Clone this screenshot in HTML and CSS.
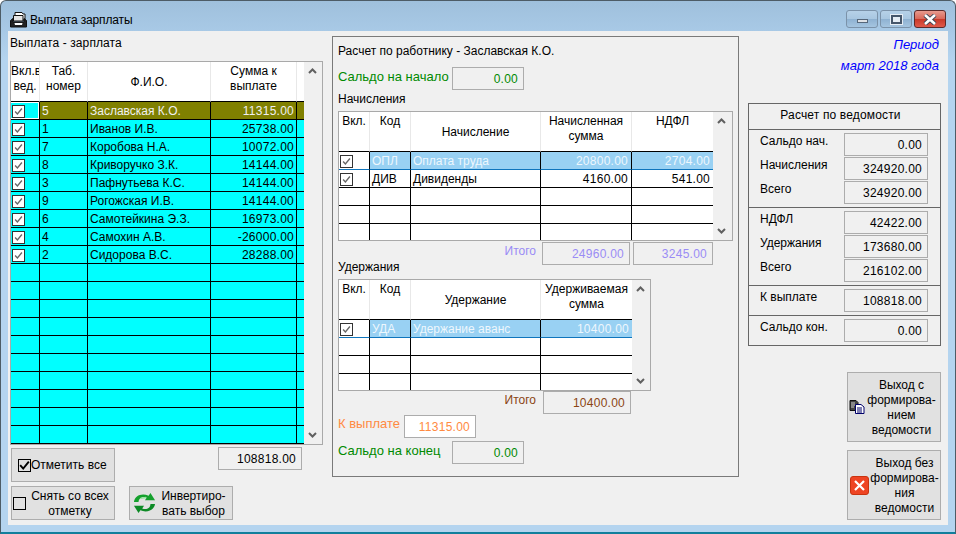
FILE: index.html
```html
<!DOCTYPE html>
<html lang="ru">
<head>
  <meta charset="UTF-8" />
  <title>Выплата зарплаты</title>
  <link rel="stylesheet" href="styles.css">
</head>
<body>
<svg class="defs" width="0" height="0">
  <symbol id="tick" viewBox="0 0 13 13"><path d="M2.5 6.5 L5.2 9.5 L10.5 3" fill="none" stroke="#666" stroke-width="1.6"/></symbol>
  <symbol id="up" viewBox="0 0 9 6"><path d="M1 5 L4.5 1.5 L8 5" fill="none" stroke="#606060" stroke-width="2"/></symbol>
  <symbol id="down" viewBox="0 0 9 6"><path d="M1 1 L4.5 4.5 L8 1" fill="none" stroke="#606060" stroke-width="2"/></symbol>
</svg>

<div class="window">
  <!-- TITLE BAR -->
  <div class="titlebar">
    <svg class="app-icon" width="17" height="16" viewBox="0 0 17 16">
      <path d="M5 0.5 H12 L13 2 H15 V8 H5 Z" fill="#fff" stroke="#111"/>
      <path d="M3.5 3.5 H13 V9 H3.5 Z" fill="#e4e4e4" stroke="#111"/>
      <path d="M0.5 8.5 L3 6.5 V10 H14 V6.5 L16.5 8.5 V15 H0.5 Z" fill="#222" stroke="#111"/>
      <path d="M4.5 11 H12.5 L12 13 H5 Z" fill="#fff"/>
    </svg>
    <span class="title-text">Выплата зарплаты</span>
    <div class="win-buttons">
      <div class="win-btn"><span class="min-glyph"></span></div>
      <div class="win-btn"><span class="max-glyph"></span></div>
      <div class="win-btn win-close">
        <svg width="16" height="11" viewBox="0 0 16 11"><path d="M3 1 L13 10 M13 1 L3 10" stroke="#3a4656" stroke-width="4.4"/><path d="M3 1 L13 10 M13 1 L3 10" stroke="#fff" stroke-width="2.6"/></svg>
      </div>
    </div>
  </div>

  <div class="client">
    <!-- LEFT COLUMN -->
    <div class="left">
      <div class="left-title">Выплата - зарплата</div>
      <div class="grid-box">
        <table class="grid payroll">
          <colgroup><col class="w29"><col class="w48"><col class="w123"><col class="w86"><col class="w7"></colgroup>
          <tr class="head">
            <th>Вкл.в<br>вед.</th><th>Таб.<br>номер</th><th class="mid">Ф.И.О.</th><th>Сумма к<br>выплате</th><th></th>
          </tr>
          <tr class="current"><td class="chk chk-on"><span class="box"><svg><use href="#tick"/></svg></span></td><td>5</td><td>Заславская К.О.</td><td class="num">11315.00</td><td></td></tr>
          <tr><td class="chk"><span class="box"><svg><use href="#tick"/></svg></span></td><td>1</td><td>Иванов И.В.</td><td class="num">25738.00</td><td></td></tr>
          <tr><td class="chk"><span class="box"><svg><use href="#tick"/></svg></span></td><td>7</td><td>Коробова Н.А.</td><td class="num">10072.00</td><td></td></tr>
          <tr><td class="chk"><span class="box"><svg><use href="#tick"/></svg></span></td><td>8</td><td>Криворучко З.К.</td><td class="num">14144.00</td><td></td></tr>
          <tr><td class="chk"><span class="box"><svg><use href="#tick"/></svg></span></td><td>3</td><td>Пафнутьева К.С.</td><td class="num">14144.00</td><td></td></tr>
          <tr><td class="chk"><span class="box"><svg><use href="#tick"/></svg></span></td><td>9</td><td>Рогожская И.В.</td><td class="num">14144.00</td><td></td></tr>
          <tr><td class="chk"><span class="box"><svg><use href="#tick"/></svg></span></td><td>6</td><td>Самотейкина Э.З.</td><td class="num">16973.00</td><td></td></tr>
          <tr><td class="chk"><span class="box"><svg><use href="#tick"/></svg></span></td><td>4</td><td>Самохин А.В.</td><td class="num">-26000.00</td><td></td></tr>
          <tr><td class="chk"><span class="box"><svg><use href="#tick"/></svg></span></td><td>2</td><td>Сидорова В.С.</td><td class="num">28288.00</td><td></td></tr>
          <tr><td></td><td></td><td></td><td></td><td></td></tr>
          <tr><td></td><td></td><td></td><td></td><td></td></tr>
          <tr><td></td><td></td><td></td><td></td><td></td></tr>
          <tr><td></td><td></td><td></td><td></td><td></td></tr>
          <tr><td></td><td></td><td></td><td></td><td></td></tr>
          <tr><td></td><td></td><td></td><td></td><td></td></tr>
          <tr><td></td><td></td><td></td><td></td><td></td></tr>
          <tr><td></td><td></td><td></td><td></td><td></td></tr>
          <tr><td></td><td></td><td></td><td></td><td></td></tr>
          <tr><td></td><td></td><td></td><td></td><td></td></tr>
        </table>
        <div class="scrollbar"><svg class="arrow"><use href="#up"/></svg><svg class="arrow"><use href="#down"/></svg></div>
      </div>

      <div class="left-actions">
        <button class="btn btn-mark">
          <span class="big-box"><svg width="15" height="15" viewBox="0 0 15 15"><path d="M2.5 7 L6 11 L12.5 3" fill="none" stroke="#000" stroke-width="2.2"/></svg></span>
          <span>Отметить все</span>
        </button>
        <div class="field total">108818.00</div>
        <button class="btn btn-clear">
          <span class="big-box"></span>
          <span class="btn-label">Снять со всех<br>отметку</span>
        </button>
        <button class="btn btn-invert">
          <svg width="25" height="22" viewBox="0 0 25 24">
            <path d="M1 11 C2 4 9 1 17 4 L19 1 L24 9 L13 9 L15 6 C10 4 6 7 6 11 Z" fill="#14a02c"/>
            <path d="M24 13 C23 20 15 23 8 20 L6 23 L1 15 L12 15 L10 18 C15 20 19 17 19 13 Z" fill="#0d8a25"/>
            <path d="M8 7 L14 6" stroke="#8fe39a" stroke-width="1.5"/>
          </svg>
          <span class="btn-label">Инвертиро-<br>вать выбор</span>
        </button>
      </div>
    </div>

    <!-- MIDDLE PANEL -->
    <div class="panel">
      <div class="panel-title">Расчет по работнику - Заславская К.О.</div>
      <div class="line line-start">
        <span class="lbl green lbl-start">Сальдо на начало</span>
        <div class="field w72 green">0.00</div>
      </div>
      <div class="sub-title">Начисления</div>
      <div class="grid-box">
        <table class="grid entries">
          <colgroup><col class="w31"><col class="w41"><col class="w130"><col class="w91"><col class="w81"></colgroup>
          <tr class="head"><th>Вкл.</th><th>Код</th><th class="mid">Начисление</th><th>Начисленная<br>сумма</th><th>НДФЛ</th></tr>
          <tr class="picked"><td class="chk"><span class="box"><svg><use href="#tick"/></svg></span></td><td>ОПЛ</td><td>Оплата труда</td><td class="num">20800.00</td><td class="num">2704.00</td></tr>
          <tr><td class="chk"><span class="box"><svg><use href="#tick"/></svg></span></td><td>ДИВ</td><td>Дивиденды</td><td class="num">4160.00</td><td class="num">541.00</td></tr>
          <tr><td></td><td></td><td></td><td></td><td></td></tr>
          <tr><td></td><td></td><td></td><td></td><td></td></tr>
          <tr class="cut"><td></td><td></td><td></td><td></td><td></td></tr>
        </table>
        <div class="scrollbar sb19"><svg class="arrow"><use href="#up"/></svg><svg class="arrow"><use href="#down"/></svg></div>
      </div>
      <div class="line line-sum1">
        <span class="lbl violet lbl-sum">Итого</span>
        <div class="field w88 violet">24960.00</div>
        <div class="field w80 violet">3245.00</div>
      </div>
      <div class="sub-title sub-hold">Удержания</div>
      <div class="grid-box">
        <table class="grid entries">
          <colgroup><col class="w31"><col class="w41"><col class="w130"><col class="w91"></colgroup>
          <tr class="head"><th>Вкл.</th><th>Код</th><th class="mid">Удержание</th><th>Удерживаемая<br>сумма</th></tr>
          <tr class="picked"><td class="chk"><span class="box"><svg><use href="#tick"/></svg></span></td><td>УДА</td><td>Удержание аванс</td><td class="num">10400.00</td></tr>
          <tr><td></td><td></td><td></td><td></td></tr>
          <tr><td></td><td></td><td></td><td></td></tr>
          <tr class="cut"><td></td><td></td><td></td><td></td></tr>
        </table>
        <div class="scrollbar"><svg class="arrow"><use href="#up"/></svg><svg class="arrow"><use href="#down"/></svg></div>
      </div>
      <div class="line line-sum2">
        <span class="lbl brown lbl-sum">Итого</span>
        <div class="field w88 brown">10400.00</div>
      </div>
      <div class="line line-pay">
        <span class="lbl orange lbl-pay">К выплате</span>
        <div class="field w72 orange paper">11315.00</div>
      </div>
      <div class="line line-end">
        <span class="lbl green lbl-start">Сальдо на конец</span>
        <div class="field w72 green">0.00</div>
      </div>
    </div>

    <!-- RIGHT COLUMN -->
    <div class="right">
      <div class="period">Период</div>
      <div class="period period-value">март 2018 года</div>

      <div class="summary">
        <div class="summary-title">Расчет по ведомости</div>
        <div class="summary-part">
          <div class="sum-row"><span>Сальдо нач.</span><div class="field w84">0.00</div></div>
          <div class="sum-row"><span>Начисления</span><div class="field w84">324920.00</div></div>
          <div class="sum-row"><span>Всего</span><div class="field w84">324920.00</div></div>
        </div>
        <div class="summary-part">
          <div class="sum-row"><span>НДФЛ</span><div class="field w84">42422.00</div></div>
          <div class="sum-row"><span>Удержания</span><div class="field w84">173680.00</div></div>
          <div class="sum-row"><span>Всего</span><div class="field w84">216102.00</div></div>
        </div>
        <div class="summary-part">
          <div class="sum-row"><span>К выплате</span><div class="field w84">108818.00</div></div>
        </div>
        <div class="summary-part">
          <div class="sum-row"><span>Сальдо кон.</span><div class="field w84">0.00</div></div>
        </div>
      </div>

      <button class="btn btn-exit btn-exit-first">
        <svg class="exit-icon" width="16" height="14" viewBox="0 0 16 14">
          <path d="M1 0.5 H7 L9 2.5 V10.5 H1 Z" fill="#444" stroke="#111"/>
          <path d="M6.5 4.5 H12 L15 7 V13.5 H6.5 Z" fill="#fff" stroke="#00006a"/>
          <path d="M8 8 H13 M8 10 H13 M8 12 H13" stroke="#00006a"/>
          <path d="M2 3 H6 M2 5 H6 M2 7 H5" stroke="#ccc"/>
        </svg>
        <span class="btn-label">Выход с<br>формирова-<br>нием<br>ведомости</span>
      </button>
      <button class="btn btn-exit">
        <svg class="exit-icon" width="19" height="19" viewBox="0 0 19 19">
          <rect x="0.5" y="0.5" width="18" height="18" rx="2.5" fill="#ee4423" stroke="#c9330f"/>
          <path d="M5 5 L14 14 M14 5 L5 14" stroke="#fff" stroke-width="2.2"/>
        </svg>
        <span class="btn-label">Выход без<br>формирова-<br>ния<br>ведомости</span>
      </button>
    </div>
  </div>
</div>
</body>
</html>
```

FILE: styles.css
```css
html, body {
  margin: 0;
  background: #fff;
}
body {
  font-family: "Liberation Sans", Arial, sans-serif;
  font-size: 12px;
  color: #000;
  width: 956px;
  height: 534px;
  overflow: hidden;
}
.defs {
  position: absolute;
}
.window {
  box-sizing: border-box;
  width: 956px;
  height: 534px;
  display: flex;
  flex-direction: column;
  padding: 0 7px 7px;
  border: 1px solid #4d5c66;
  border-bottom: 2px solid #127f9c;
  border-radius: 6px 6px 0 0;
  background: linear-gradient(#9fc0dc 0, #a8c9e6 30px, #b4d4ef 60px);
}

/* Title bar */
.titlebar {
  box-sizing: border-box;
  height: 30px;
  padding-top: 8px;
  display: flex;
  align-items: center;
  flex: none;
}
.app-icon {
  margin: 0 3px 0 2px;
}
.title-text {
  font-size: 12px;
  letter-spacing: -0.15px;
}
.win-buttons {
  margin-left: auto;
  margin-right: 2px;
  margin-top: -2px;
  display: flex;
  gap: 2px;
}
.win-btn {
  box-sizing: border-box;
  width: 32px;
  height: 18px;
  border: 1px solid #7b92a9;
  border-radius: 3px;
  background: linear-gradient(#b6d1e8 0, #a9c7e1 48%, #8fb2d2 52%, #a5c5e0 100%);
  display: flex;
  align-items: center;
  justify-content: center;
}
.win-close {
  border-color: #5c2a2a;
  background: linear-gradient(#e79a8e 0, #d9695b 48%, #c93a2a 52%, #e0594a 100%);
}
.min-glyph {
  width: 11px;
  height: 4px;
  margin-top: 3px;
  box-sizing: border-box;
  background: #dfe2e6;
  border: 1px solid #56677a;
}
.max-glyph {
  width: 11px;
  height: 9px;
  box-sizing: border-box;
  background: #e6edf4;
  border: 2px solid #46566a;
  outline: 1px solid #e6edf4;
}

/* Client area */
.client {
  flex: 1;
  background: #f0f0f0;
  display: flex;
  padding-left: 2px;
  min-height: 0;
}
.left {
  width: 313px;
  margin-right: 9px;
}
.left-title {
  height: 30px;
  line-height: 24px;
  letter-spacing: 0.1px;
}
.grid-box {
  display: flex;
  align-items: stretch;
  width: max-content;
  border: 1px solid #a9a9a9;
  background: #fff;
}
.scrollbar {
  width: 18px;
  background: #f0f0f0;
  display: flex;
  flex-direction: column;
  justify-content: space-between;
  align-items: center;
  padding: 6px 2px 6px 0;
  box-sizing: border-box;
}
.sb19 {
  width: 19px;
}
.arrow {
  width: 9px;
  height: 6px;
}

/* Tables */
.grid {
  border-collapse: separate;
  border-spacing: 0;
  table-layout: fixed;
  width: min-content;
}
.w7 { width: 7px; }
.w29 { width: 29px; }
.w31 { width: 31px; }
.w41 { width: 41px; }
.w48 { width: 48px; }
.w81 { width: 81px; }
.w86 { width: 86px; }
.w91 { width: 91px; }
.w123 { width: 123px; }
.w130 { width: 130px; }
.grid th, .grid td {
  box-sizing: border-box;
  padding: 0;
  font-weight: normal;
  white-space: nowrap;
  overflow: hidden;
}
.grid th {
  height: 40px;
  padding-top: 2px;
  line-height: 15px;
  vertical-align: top;
  text-align: center;
  background: #fff;
  border-right: 1px solid #e8e8e8;
  border-bottom: 1px solid #000;
}
.grid th.mid {
  vertical-align: middle;
}
.grid th:last-child {
  border-right: 0;
}
.grid td {
  height: 18px;
  line-height: 15px;
  padding: 2px 2px 0 2px;
  border-right: 1px solid #000;
  border-bottom: 1px solid #000;
}
.grid td:last-child {
  border-right: 0;
}
.grid td.num {
  text-align: right;
  letter-spacing: 0.25px;
}
.entries td.num {
  padding-right: 3px;
}
.grid td.chk {
  padding: 0 0 0 1px;
  vertical-align: top;
  line-height: 0;
}
.grid tr.cut td {
  height: 16px;
  border-bottom: 0;
}
.payroll td {
  background: #00ffff;
}
.payroll .current td {
  background: #808000;
  color: #f0f0f0;
}
.payroll .current td.chk-on {
  background: #00ffff;
  box-shadow: inset -1px 0 #fff, inset 0 -1px #fff, inset 0 1px #fff;
}
.entries td {
  background: #fff;
}
.entries .picked td {
  background: #99d1f3;
  color: #eef7fd;
  border-bottom-color: #0f75bd;
}
.entries .picked td.chk {
  background: #fff;
}
.box {
  display: inline-block;
  box-sizing: border-box;
  width: 13px;
  height: 13px;
  margin-top: 3px;
  background: #fff;
  border: 1px solid #333;
}
.box svg {
  display: block;
  width: 11px;
  height: 11px;
}

/* Read-only fields */
.field {
  box-sizing: border-box;
  height: 23px;
  line-height: 22px;
  padding-right: 5px;
  text-align: right;
  letter-spacing: 0.25px;
  border: 1px solid #acacac;
  background: #f0f0f0;
  flex: none;
}
.w72 { width: 72px; }
.w80 { width: 80px; }
.w84 { width: 84px; }
.w88 { width: 88px; }
.paper { background: #fff; }
.green { color: #008a00; }
.violet { color: #9a8cf5; }
.brown { color: #8b4513; }
.orange { color: #ff8a42; }

/* Buttons */
.btn {
  box-sizing: border-box;
  font: inherit;
  color: #000;
  padding: 0;
  background: #e1e1e1;
  border: 1px solid #adadad;
  display: flex;
  align-items: center;
}
.btn-label {
  flex: 1;
  text-align: center;
  line-height: 15px;
}

/* Left bottom actions */
.left-actions {
  display: grid;
  grid-template-columns: 104px 14px 104px;
  grid-template-rows: 35px 34px;
  margin-top: 3px;
  margin-left: 1px;
  row-gap: 3px;
}
.btn-mark {
  height: 34px;
  grid-column: 1;
  grid-row: 1;
  padding-left: 6px;
}
.big-box {
  box-sizing: border-box;
  width: 13px;
  height: 13px;
  border: 1px solid #000;
  flex: none;
  display: flex;
  align-items: center;
  justify-content: center;
}
.btn-mark .big-box svg {
  flex: none;
  width: 13px;
  height: 13px;
}
.total {
  grid-column: 3;
  grid-row: 1;
  width: 84px;
  margin-left: 89px;
  margin-top: -1px;
  justify-self: start;
}
.btn-clear {
  grid-column: 1;
  grid-row: 2;
  height: 34px;
  padding-left: 1px;
}
.btn-invert {
  grid-column: 3;
  grid-row: 2;
  height: 34px;
  padding: 0 2px;
}
.btn-clear .btn-label, .btn-invert .btn-label {
  padding-top: 2px;
}

/* Middle panel */
.panel {
  box-sizing: border-box;
  width: 407px;
  height: 441px;
  margin-top: 5px;
  margin-right: 9px;
  padding: 0 5px;
  border: 1px solid #7a7a7a;
  flex: none;
}
.panel-title {
  height: 30px;
  line-height: 29px;
}
.line {
  display: flex;
  align-items: flex-start;
}
.lbl {
  line-height: 15px;
}
.lbl-start {
  width: 114px;
  font-size: 13px;
}
.lbl-pay {
  width: 66px;
  font-size: 13px;
}
.lbl-sum {
  width: 198px;
  text-align: right;
}
.line-start .lbl, .line-end .lbl { margin-top: 2px; }
.line-sum1 { margin-top: 1px; height: 18px; gap: 3px; }
.line-sum1 .lbl { margin-top: 2px; margin-right: 3px; }
.line-sum2 .lbl { margin-top: 2px; margin-right: 7px; flex: none; }
.line-pay { margin-top: 1px; }
.line-pay .lbl { margin-top: 1px; }
.line-end { margin-top: 3px; }
.sub-title {
  height: 21px;
  line-height: 19px;
}
.sub-hold {
  height: 19px;
  line-height: 14px;
}

/* Right column */
.right {
  width: 193px;
  flex: none;
}
.period {
  font-size: 13px;
  font-style: italic;
  color: #0000ff;
  text-align: right;
  padding-right: 2px;
  line-height: 21px;
  margin-top: 3px;
}
.period-value {
  margin-top: 0;
}
.summary {
  margin-top: 27px;
  box-sizing: border-box;
  border: 1px solid #666;
  border-bottom: 0;
  width: 193px;
}
.summary-title {
  box-sizing: border-box;
  height: 26px;
  line-height: 23px;
  text-align: center;
  padding-right: 8px;
  letter-spacing: 0.15px;
  border-bottom: 1px solid #666;
}
.summary-part {
  padding: 3px 12px 3px 11px;
  border-bottom: 1px solid #666;
  display: flex;
  flex-direction: column;
  gap: 1px;
}
.sum-row {
  display: flex;
  justify-content: space-between;
  line-height: 17px;
}
.btn-exit {
  width: 94px;
  height: 70px;
  margin-left: 99px;
  margin-top: 8px;
  padding: 0 0 0 2px;
}
.btn-exit-first {
  margin-top: 26px;
  padding: 0 2px 0 1px;
}
.btn-exit .btn-label {
  padding-top: 2px;
}
.exit-icon {
  flex: none;
}
```
